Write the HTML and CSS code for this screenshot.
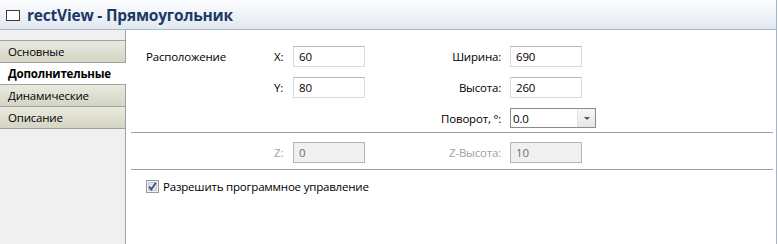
FILE: index.html
```html
<!DOCTYPE html>
<html lang="ru">
<head>
  <meta charset="UTF-8" />
  <meta name="viewport" content="width=device-width, initial-scale=1.0"/>
  <title>rectView - Прямоугольник</title>
  <link rel="stylesheet" href="styles.css">
</head>
<body>
  <div class="frame">
    <header class="titlebar">
      <svg class="title-icon" width="14" height="11" viewBox="0 0 14 11">
        <rect x="0.5" y="0.5" width="13" height="10" fill="#fff" stroke="#3c3c3c"/>
      </svg>
      <span class="title-text">rectView - Прямоугольник</span>
    </header>

    <div class="body">
      <nav class="tabs">
        <div class="tabs-top"></div>
        <div class="tab">Основные</div>
        <div class="tab active">Дополнительные</div>
        <div class="tab">Динамические</div>
        <div class="tab">Описание</div>
      </nav>

      <section class="page">
        <div class="grid position">
          <div class="group">Расположение</div>
          <div class="lbl">X:</div>
          <div class="field">60</div>
          <div class="lbl right">Ширина:</div>
          <div class="field">690</div>

          <div></div>
          <div class="lbl">Y:</div>
          <div class="field">80</div>
          <div class="lbl right">Высота:</div>
          <div class="field">260</div>

          <div></div>
          <div></div>
          <div></div>
          <div class="lbl right">Поворот, °:</div>
          <div class="combo">
            <span class="combo-value">0.0</span>
            <span class="combo-btn"><span class="arrow"></span></span>
          </div>
        </div>

        <div class="sep"></div>

        <div class="grid depth">
          <div></div>
          <div class="lbl disabled">Z:</div>
          <div class="field disabled">0</div>
          <div class="lbl right disabled">Z-Высота:</div>
          <div class="field disabled">10</div>
        </div>

        <div class="sep second"></div>

        <label class="check">
          <svg class="check-box" width="13" height="13" viewBox="0 0 13 13">
            <rect x="0.5" y="0.5" width="12" height="12" fill="#f4f4f4" stroke="#9a9a9a"/>
            <rect x="2.5" y="2.5" width="8" height="8" fill="#e2e4ea" stroke="#c4c7cf"/>
            <path d="M3.2 6.6 L5.3 9.4 L9.8 2.8" fill="none" stroke="#3b4f8c" stroke-width="1.8"/>
          </svg>
          <span>Разрешить программное управление</span>
        </label>
      </section>
    </div>
  </div>
</body>
</html>
```

FILE: styles.css
```css
body {
  margin: 0;
  font-family: "Open Sans", "Liberation Sans", sans-serif;
  font-size: 11.5px;
  letter-spacing: -0.2px;
  color: #000;
  background: #fff;
}

.frame {
  width: 776px;
  height: 244px;
  border-right: 1px solid #a6b5c9;
  display: flex;
  flex-direction: column;
}

.titlebar {
  height: 29px;
  border-bottom: 1px solid #a9b8c9;
  background: linear-gradient(#fdfdfe, #e2e8f1);
  display: flex;
  align-items: center;
  padding-left: 6px;
}

.title-icon {
  margin-right: 7px;
  margin-top: 1px;
}

.title-text {
  font-size: 15.5px;
  font-weight: bold;
  color: #1c3864;
}

.body {
  flex: 1;
  display: flex;
}

/* left tab column */
.tabs {
  width: 125px;
  border-right: 1px solid #a0a0a0;
  background: #f0f0f0;
}

.tabs-top {
  height: 10px;
  border-bottom: 1px solid #a0a0a0;
}

.tab {
  height: 21px;
  line-height: 21px;
  padding-left: 8px;
  border-bottom: 1px solid #a0a0a0;
  background: linear-gradient(#e9e9de, #d5d5c4);
  white-space: nowrap;
}

.tab.active {
  background: #fff;
  font-weight: bold;
  margin-right: -1px;
}

/* right page */
.page {
  flex: 1;
  background: #fff;
}

.grid {
  display: grid;
  grid-template-columns: 128px 19px 72px 145px 86px;
  grid-auto-rows: 21px;
  margin-left: 20px;
}

.position {
  row-gap: 10px;
  margin-top: 16px;
}

.depth {
  margin-top: 9px;
}

.group,
.lbl {
  display: flex;
  align-items: center;
  white-space: nowrap;
}

.lbl.right {
  justify-content: flex-end;
  padding-right: 9px;
}

.lbl.disabled {
  color: #a0a0a0;
}

.field {
  width: 72px;
  box-sizing: border-box;
  border: 1px solid #d5dbe2;
  border-top-color: #b1b7bf;
  padding-left: 5px;
  display: flex;
  align-items: center;
}

.field.disabled {
  background: #f0f0f0;
  border-color: #b4b4b4;
  color: #6d6d6d;
}

.combo {
  height: 20px;
  box-sizing: border-box;
  border: 1px solid #868b94;
  display: flex;
  align-items: center;
}

.combo-value {
  flex: 1;
  padding-left: 2px;
}

.combo-btn {
  width: 17px;
  height: 100%;
  background: linear-gradient(#f6f6f6, #e6e6e6);
  border-left: 1px solid #e0e0e0;
  display: flex;
  align-items: center;
  justify-content: center;
}

.arrow {
  width: 0;
  height: 0;
  border-left: 3px solid transparent;
  border-right: 3px solid transparent;
  border-top: 3px solid #555;
}

.sep {
  margin: 3px 3px 0 5px;
  border-top: 1px solid #a0a0a0;
}

.sep.second {
  margin-top: 6px;
}

.check {
  margin: 10px 0 0 20px;
  display: flex;
  align-items: center;
  height: 13px;
}

.check-box {
  margin-right: 4px;
}
```
